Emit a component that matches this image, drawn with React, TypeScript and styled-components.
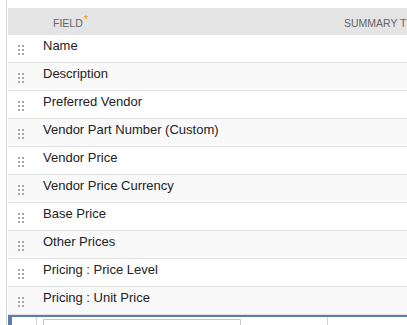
import React from 'react';
import styled, { createGlobalStyle } from 'styled-components';

const GlobalStyle = createGlobalStyle`
  html, body {
    margin: 0;
    padding: 0;
    background: #fff;
    overflow: hidden;
  }
  body {
    font-family: Arial, "Liberation Sans", sans-serif;
  }
`;

const Page = styled.div`
  width: 407px;
  height: 325px;
  overflow: hidden;
  padding-top: 8px;
  box-sizing: border-box;
  margin-left: 6px;
  border-left: 1px solid #d6d6d6;
  padding-left: 1px;
`;

const Table = styled.div`
  width: 600px;
`;

const Row = styled.div<{ $alt?: boolean }>`
  display: grid;
  grid-template-columns: 29px 291px 1fr;
  height: 28px;
  box-sizing: border-box;
  border-bottom: 1px solid #e2e2e2;
  background: ${p => (p.$alt ? '#f9f9f9' : '#fff')};
  align-items: center;
`;

const HeaderRow = styled.div`
  display: grid;
  grid-template-columns: 29px 291px 1fr;
  height: 27px;
  background: #e4e4e4;
  align-items: center;
`;

const HeaderCell = styled.div<{ $pad: number }>`
  font-size: 10.5px;
  color: #666;
  text-transform: uppercase;
  padding-left: ${p => p.$pad}px;
  padding-top: 2px;
  white-space: nowrap;
`;

const Required = styled.span`
  color: #e8932b;
  font-size: 11px;
  position: relative;
  top: -4px;
  margin-left: 1px;
`;

const Handle = styled.div`
  display: grid;
  grid-template-columns: repeat(2, 2px);
  grid-template-rows: repeat(3, 2px);
  gap: 2px;
  margin-left: 10px;
  margin-top: 2px;

  span {
    background: #a8a8a8;
  }
`;

const FieldName = styled.div`
  font-size: 13px;
  color: #222;
  padding-left: 6px;
  margin-top: -6px;
  white-space: nowrap;
`;

const EditRow = styled.div`
  display: grid;
  grid-template-columns: 29px 291px 1fr;
  height: 20px;
  border-top: 2px solid #5d7bab;
`;

const EditCell = styled.div<{ $blue?: boolean; $divider?: boolean }>`
  border-right: ${p => (p.$divider ? '1px solid #d5d5d5' : 'none')};
  box-sizing: border-box;
  position: relative;
  ${p => (p.$blue ? 'background: linear-gradient(to right, #5d7bab 4px, #fff 4px);' : '')}
`;

const Input = styled.div`
  margin: 2px 0 0 6px;
  width: 198px;
  height: 14px;
  border: 1px solid #c8c8c8;
  border-bottom: none;
  box-sizing: border-box;
`;

const fields = [
  'Name',
  'Description',
  'Preferred Vendor',
  'Vendor Part Number (Custom)',
  'Vendor Price',
  'Vendor Price Currency',
  'Base Price',
  'Other Prices',
  'Pricing : Price Level',
  'Pricing : Unit Price',
];

const DragHandle: React.FC = () => (
  <Handle>
    {Array.from({ length: 6 }).map((_, i) => (
      <span key={i} />
    ))}
  </Handle>
);

const App: React.FC = () => (
  <>
    <GlobalStyle />
    <Page>
      <Table>
        <HeaderRow>
          <div />
          <HeaderCell $pad={16}>
            Field<Required>*</Required>
          </HeaderCell>
          <HeaderCell $pad={16}>Summary Type</HeaderCell>
        </HeaderRow>
        {fields.map((f, i) => (
          <Row key={f} $alt={i % 2 === 1}>
            <DragHandle />
            <FieldName>{f}</FieldName>
            <div />
          </Row>
        ))}
        <EditRow>
          <EditCell $blue $divider />
          <EditCell $divider>
            <Input />
          </EditCell>
          <EditCell />
        </EditRow>
      </Table>
    </Page>
  </>
);

export default App;
